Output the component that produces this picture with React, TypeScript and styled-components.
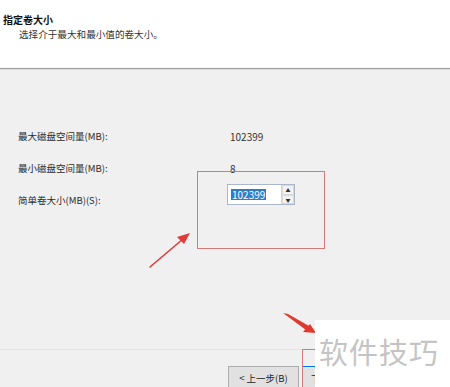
import React from "react";
import styled, { createGlobalStyle } from "styled-components";

const Global = createGlobalStyle`
  html, body { margin: 0; padding: 0; background: #f0f0f0; overflow: hidden; }
  body { font-family: "Noto Sans CJK SC", "Liberation Sans", sans-serif; color: #1a1a1a; }
`;

const Page = styled.div`
  position: relative;
  width: 450px;
  height: 387px;
  overflow: hidden;
  display: flex;
  flex-direction: column;
  background: #f0f0f0;
`;

const Header = styled.div`
  height: 68px;
  box-sizing: border-box;
  background: #ffffff;
  padding: 13px 0 0 3px;
  border-bottom: 1px solid #f6f6f6;
`;

const Title = styled.div`
  font-size: 10px;
  font-weight: 700;
  line-height: 14px;
  color: #111;
`;

const Subtitle = styled.div`
  font-size: 9.6px;
  line-height: 14px;
  margin: 0 0 0 16px;
  color: #333;
`;

const Divider = styled.div`
  height: 1px;
  background: #a0a0a0;
  border-bottom: 1px solid #dcdcdc;
`;

const Body = styled.div`
  flex: 1;
  display: grid;
  grid-template-columns: 212px 1fr;
  grid-auto-rows: 32px;
  align-content: start;
  padding: 59px 0 0 18px;
`;

const Label = styled.div`
  font-size: 9.5px;
  color: #2a2a2a;
  display: flex;
  align-items: center;
  height: 14px;
`;

const Value = styled.div`
  font-size: 10px;
  color: #333;
  height: 14px;
  display: flex;
  align-items: center;
`;

const Spin = styled.div`
  margin: -9px 0 0 -3px;
  width: 68px;
  height: 21px;
  box-sizing: border-box;
  border: 1px solid #a9b7c8;
  background: #fff;
  display: flex;
`;

const SpinInput = styled.div`
  flex: 1;
  display: flex;
  align-items: center;
  padding-left: 3px;
`;

const Selected = styled.span`
  background: #2f7cc8;
  color: #fff;
  font-size: 10px;
  line-height: 11px;
  padding: 0 1px;
`;

const SpinButtons = styled.div`
  width: 12px;
  display: flex;
  flex-direction: column;
  border-left: 1px solid #d6d6d6;
`;

const SpinBtn = styled.div`
  flex: 1;
  display: flex;
  align-items: center;
  justify-content: center;
  background: #f2f2f2;
  border: 1px solid #dadada;
  font-size: 5px;
  color: #333;
`;

const Footer = styled.div`
  height: 38px;
  display: flex;
  flex-direction: column;
`;

const FooterDivider = styled.div`
  height: 1px;
  background: #a3a3a3;
  border-top: 1px solid #e4e4e4;
`;

const ButtonRow = styled.div`
  display: flex;
  gap: 3px;
  padding: 16px 0 0 228px;
`;

const Button = styled.div<{ $primary?: boolean }>`
  width: ${(p) => (p.$primary ? "72px" : "71px")};
  height: 23px;
  box-sizing: border-box;
  border: 1px solid ${(p) => (p.$primary ? "#0078d7" : "#adadad")};
  background: #e1e1e1;
  font-size: 9.5px;
  display: flex;
  align-items: center;
  justify-content: ${(p) => (p.$primary ? "flex-start" : "center")};
  padding-left: ${(p) => (p.$primary ? "8px" : "0")};
  color: #222;
`;

const Highlight = styled.div<{ $x: number; $y: number; $w: number; $h: number }>`
  position: absolute;
  left: ${(p) => p.$x}px;
  top: ${(p) => p.$y}px;
  width: ${(p) => p.$w}px;
  height: ${(p) => p.$h}px;
  box-sizing: border-box;
  border: 1px solid #d27a7a;
  pointer-events: none;
`;

const Arrows = styled.svg`
  position: absolute;
  left: 0;
  top: 0;
  pointer-events: none;
`;

const Watermark = styled.div`
  position: absolute;
  left: 315px;
  top: 320px;
  right: 0;
  bottom: 0;
  background: #ffffff;
  font-size: 29px;
  color: #c4c4c4;
  letter-spacing: 1px;
  padding: 10px 0 0 4px;
  box-sizing: border-box;
  white-space: nowrap;
`;

export default function App() {
  return (
    <>
      <Global />
      <Page>
        <Header>
          <Title>指定卷大小</Title>
          <Subtitle>选择介于最大和最小值的卷大小。</Subtitle>
        </Header>
        <Divider />
        <Body>
          <Label>最大磁盘空间量(MB):</Label>
          <Value>102399</Value>
          <Label>最小磁盘空间量(MB):</Label>
          <Value>8</Value>
          <Label>简单卷大小(MB)(S):</Label>
          <Spin>
            <SpinInput>
              <Selected>102399</Selected>
            </SpinInput>
            <SpinButtons>
              <SpinBtn>▲</SpinBtn>
              <SpinBtn>▼</SpinBtn>
            </SpinButtons>
          </Spin>
        </Body>
        <Footer>
          <FooterDivider />
          <ButtonRow>
            <Button>&lt; 上一步(B)</Button>
            <Button $primary>下</Button>
          </ButtonRow>
        </Footer>
        <Highlight $x={197} $y={171} $w={128} $h={78} />
        <Highlight $x={302} $y={349} $w={80} $h={60} />
        <Arrows width="450" height="387" viewBox="0 0 450 387">
          <line x1="150" y1="267" x2="183" y2="239" stroke="#e03a3a" strokeWidth="1.6" strokeLinecap="round" />
          <polygon points="190,233 177,237 184,244" fill="#e03a3a" />
          <polygon points="283,313 288,314 309,326 306,330" fill="#e0392f" />
          <polygon points="316,333 303,332 310,324" fill="#e0392f" />
        </Arrows>
        <Watermark>软件技巧</Watermark>
      </Page>
    </>
  );
}
